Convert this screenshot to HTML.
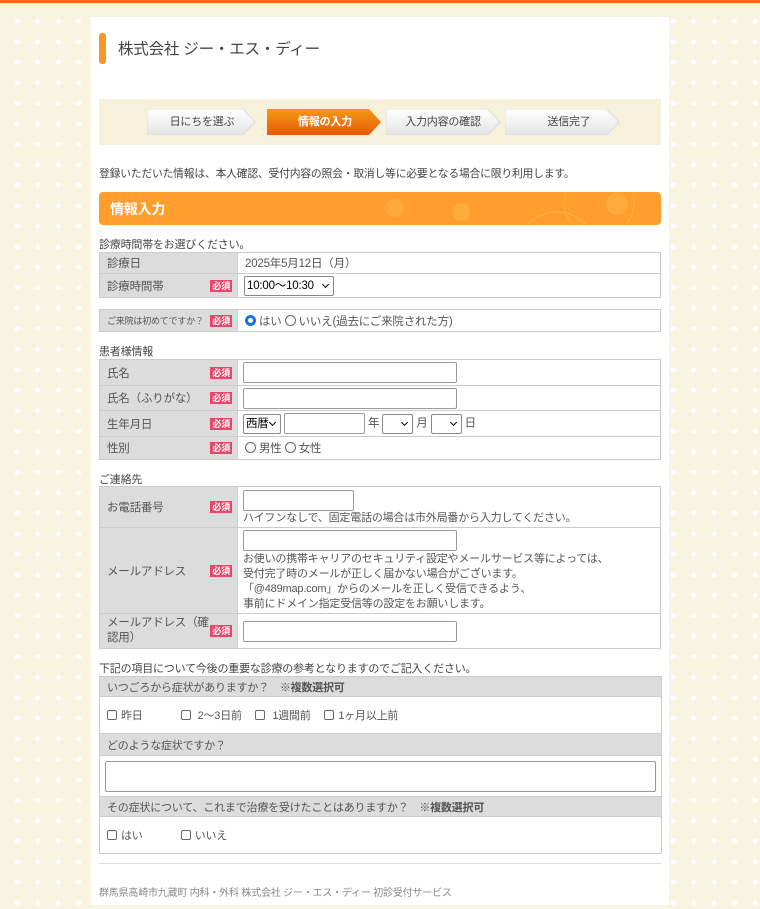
<!DOCTYPE html>
<html><head><meta charset="utf-8"><style>
*{box-sizing:border-box;margin:0;padding:0}
body{width:760px;height:909px;overflow:hidden;position:relative;font-family:"Liberation Sans","Noto Sans CJK JP",sans-serif;color:#555;font-size:12px;letter-spacing:-0.2px;
background-color:#f8f4e1;background-image:radial-gradient(circle,#fff 2.2px,transparent 2.6px);background-size:20.5px 20.5px;background-position:7px 11px}
.topbar{position:absolute;left:0;top:0;width:760px;height:3px;background:#ff6b12}
.panel{position:absolute;left:91px;top:17px;width:578px;height:888px;background:#fff}
.a{position:absolute}
.bar{left:99px;top:33px;width:7px;height:31px;background:#f9962a;border-radius:3px}
.title{left:118px;top:37px;font-size:15.5px;color:#444}
.steps{left:99px;top:99px;width:562px;height:46px;background:#f7f1dc}
.st{position:absolute;top:10px;height:26px;font-size:11px;line-height:26px;text-align:center;color:#444}
.st svg{position:absolute;left:0;top:0}
.st span{position:relative}
.intro{left:99px;top:165px;font-size:10.8px;color:#444}
.hdr{left:99px;top:192px;width:562px;height:33px;border-radius:4px;background:#ff9d2d;overflow:hidden}
.hdr b{position:absolute;left:11px;top:7px;color:#fff;font-size:14px;font-weight:bold}
.cap{left:99px;font-size:11px;color:#444}
table{position:absolute;left:99px;width:562px;border-collapse:collapse;font-size:11.5px}
td{border:1px solid #ccc;padding:0 7px;vertical-align:middle}
td.l{background:#dcdcdc;width:138px;position:relative}
.req{position:absolute;right:5px;top:50%;margin-top:-6px;background:#e8466a;color:#fff;font-size:9px;font-weight:bold;padding:0 2px;line-height:12px}
.in{display:inline-block;border:1px solid #999;border-radius:2px;height:21px;background:#fff;vertical-align:middle}
.sel{display:inline-block;border:1px solid #888;border-radius:2px;height:20px;background:#fff;vertical-align:middle;font-size:11.5px;line-height:18px;padding-left:2px;position:relative;color:#000}
.sel:after{content:"";position:absolute;right:5px;top:5px;width:4px;height:4px;border-right:1.5px solid #000;border-bottom:1.5px solid #000;transform:rotate(45deg)}
.rad{display:inline-block;width:11px;height:11px;border:1px solid #666;border-radius:50%;vertical-align:-1px;margin-right:3px}
.rad.on{border:3px solid #1a73e8}
.cb{display:inline-block;width:10px;height:10px;border:1px solid #666;border-radius:2px;vertical-align:-1px;margin-right:4px}
.gh td{background:#dcdcdc;height:20px;font-size:11px}
.note{font-size:11px;line-height:15px}
</style></head><body>
<div class="topbar"></div>
<div class="panel"></div>
<div class="a bar"></div>
<div class="a title">株式会社 ジー・エス・ディー</div>
<div class="a steps">
 <div class="st" style="left:48px;width:110px"><svg width="110" height="26"><defs><linearGradient id="g1" x1="0" y1="0" x2="0" y2="1"><stop offset="0" stop-color="#fff"/><stop offset="1" stop-color="#e4e4e4"/></linearGradient></defs><path d="M0 0H96L108 13L96 26H0Z" fill="url(#g1)" stroke="#ddd"/></svg><span>日にちを選ぶ</span></div>
 <div class="st" style="left:168px;width:116px;color:#fff;font-weight:bold"><svg width="116" height="26"><defs><linearGradient id="g2" x1="0" y1="0" x2="0" y2="1"><stop offset="0" stop-color="#f49a10"/><stop offset="1" stop-color="#e9580a"/></linearGradient></defs><path d="M0 0H102L114 13L102 26H0Z" fill="url(#g2)"/></svg><span>情報の入力</span></div>
 <div class="st" style="left:287px;width:116px"><svg width="116" height="26"><path d="M0 0H102L114 13L102 26H0Z" fill="url(#g1)" stroke="#ddd"/></svg><span style="margin-right:2px">入力内容の確認</span></div>
 <div class="st" style="left:406px;width:116px"><svg width="116" height="26"><path d="M0 0H102L114 13L102 26H0Z" fill="url(#g1)" stroke="#ddd"/></svg><span style="margin-left:12px">送信完了</span></div>
</div>
<div class="a intro">登録いただいた情報は、本人確認、受付内容の照会・取消し等に必要となる場合に限り利用します。</div>
<div class="a hdr"><svg class="a" style="left:0;top:0" width="562" height="33"><circle cx="295" cy="16" r="9" fill="#ffb547" opacity=".6"/><circle cx="362" cy="20" r="9" fill="#ffb547" opacity=".6"/><circle cx="458" cy="60" r="40" fill="none" stroke="#ffc860" opacity=".7"/><circle cx="500" cy="10" r="35" fill="none" stroke="#ffc860" opacity=".5"/><circle cx="518" cy="12" r="11" fill="#ffb547" opacity=".6"/></svg><b>情報入力</b></div>

<div class="a cap" style="top:236px">診療時間帯をお選びください。</div>
<table style="top:252px">
<tr style="height:21px"><td class="l">診療日</td><td>2025年5月12日（月）</td></tr>
<tr style="height:24px"><td class="l">診療時間帯<span class="req">必須</span></td><td style="padding-left:6px"><span class="sel" style="width:90px">10:00〜10:30</span></td></tr>
</table>
<table style="top:309px">
<tr style="height:22px"><td class="l" style="font-size:9px">ご来院は初めてですか？<span class="req">必須</span></td><td><span class="rad on"></span>はい <span class="rad"></span>いいえ(過去にご来院された方)</td></tr>
</table>
<div class="a cap" style="top:343px">患者様情報</div>
<table style="top:359px">
<tr style="height:26px"><td class="l">氏名<span class="req">必須</span></td><td style="padding-left:5px"><span class="in" style="width:214px"></span></td></tr>
<tr style="height:25px"><td class="l">氏名（ふりがな）<span class="req">必須</span></td><td style="padding-left:5px"><span class="in" style="width:214px"></span></td></tr>
<tr style="height:26px"><td class="l">生年月日<span class="req">必須</span></td><td style="padding-left:5px"><span class="sel" style="width:38px">西暦</span> <span class="in" style="width:81px"></span> 年 <span class="sel" style="width:31px"></span> 月 <span class="sel" style="width:31px"></span> 日</td></tr>
<tr style="height:23px"><td class="l">性別<span class="req">必須</span></td><td><span class="rad"></span>男性 <span class="rad"></span>女性</td></tr>
</table>
<div class="a cap" style="top:471px">ご連絡先</div>
<table style="top:486px">
<tr style="height:41px"><td class="l">お電話番号<span class="req">必須</span></td><td style="padding-left:5px" class="note"><span class="in" style="width:111px;margin-top:2px"></span><br>ハイフンなしで、固定電話の場合は市外局番から入力してください。</td></tr>
<tr style="height:86px"><td class="l">メールアドレス<span class="req">必須</span></td><td style="padding-left:5px" class="note"><span class="in" style="width:214px;margin-bottom:1px"></span><br>お使いの携帯キャリアのセキュリティ設定やメールサービス等によっては、<br>受付完了時のメールが正しく届かない場合がございます。<br>「@489map.com」からのメールを正しく受信できるよう、<br>事前にドメイン指定受信等の設定をお願いします。</td></tr>
<tr style="height:35px"><td class="l" style="line-height:15px">メールアドレス（確<br>認用）<span class="req">必須</span></td><td style="padding-left:5px"><span class="in" style="width:214px"></span></td></tr>
</table>
<div class="a cap" style="top:660px">下記の項目について今後の重要な診療の参考となりますのでご記入ください。</div>
<table style="top:676px;font-size:11px">
<tr class="gh"><td>いつごろから症状がありますか？　<b>※複数選択可</b></td></tr>
<tr style="height:37px"><td><span class="cb"></span>昨日 　　 　<span class="cb"></span> 2～3日前 　<span class="cb"></span> 1週間前 　<span class="cb"></span>1ヶ月以上前</td></tr>
<tr class="gh" style="height:22px"><td>どのような症状ですか？</td></tr>
<tr style="height:41px"><td style="padding:0 5px"><span class="in" style="width:551px;height:31px;display:block"></span></td></tr>
<tr class="gh"><td>その症状について、これまで治療を受けたことはありますか？　<b>※複数選択可</b></td></tr>
<tr style="height:37px"><td><span class="cb"></span>はい 　　 　<span class="cb"></span>いいえ</td></tr>
</table>
<div class="a" style="left:99px;top:863px;width:562px;height:1px;background:#ddd"></div>
<div class="a" style="left:99px;top:884px;font-size:10px;color:#888">群馬県高崎市九蔵町 内科・外科 株式会社 ジー・エス・ディー 初診受付サービス</div>
</body></html>
